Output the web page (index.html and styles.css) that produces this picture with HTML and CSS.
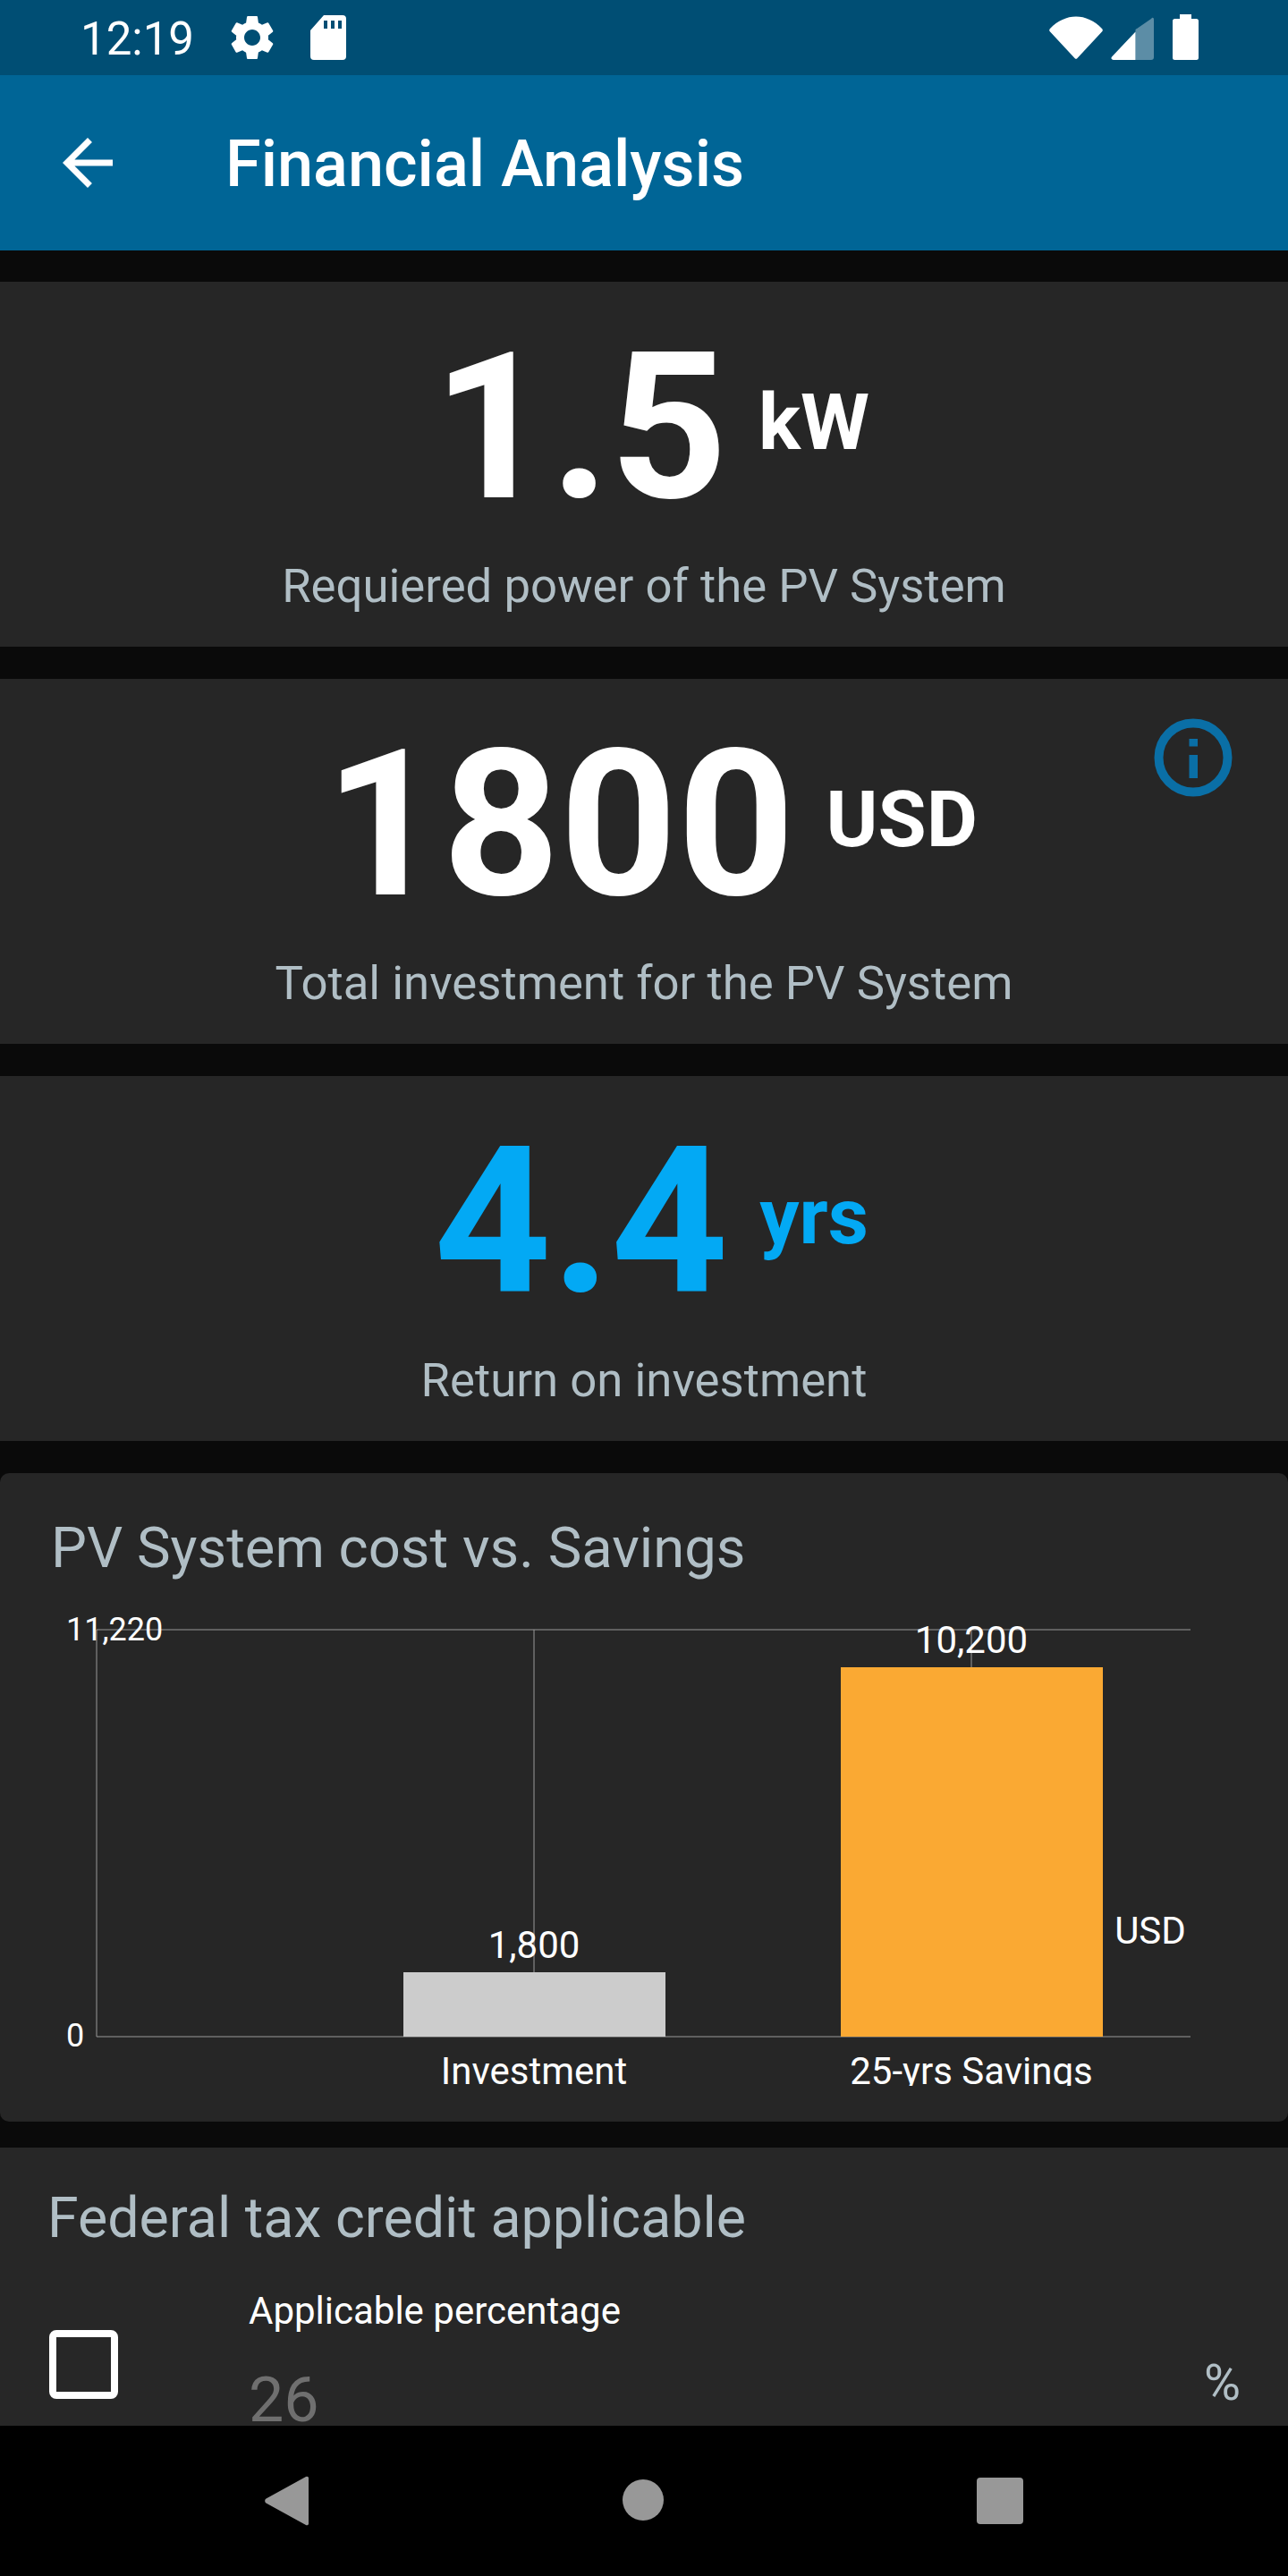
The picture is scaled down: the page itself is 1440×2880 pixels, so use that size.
FILE: index.html
```html
<!DOCTYPE html>
<html lang="en">
<head>
<meta charset="utf-8">
<title>Financial Analysis</title>
<link rel="stylesheet" href="styles.css">
</head>
<body>
<div class="screen">
  <header class="status">
    <span class="clock">12:19</span>
    <svg class="ic-gear" viewBox="0 0 24 24"><path d="M19.14 12.94c.04-.3.06-.61.06-.94 0-.32-.02-.64-.07-.94l2.03-1.58c.18-.14.23-.41.12-.61l-1.92-3.32c-.12-.22-.37-.29-.59-.22l-2.39.96c-.5-.38-1.03-.7-1.62-.94l-.36-2.54c-.04-.24-.24-.41-.48-.41h-3.84c-.24 0-.43.17-.47.41l-.36 2.54c-.59.24-1.13.57-1.62.94l-2.39-.96c-.22-.08-.47 0-.59.22L2.74 8.87c-.12.21-.08.47.12.61l2.03 1.58c-.05.3-.09.63-.09.94s.02.64.07.94l-2.03 1.58c-.18.14-.23.41-.12.61l1.92 3.32c.12.22.37.29.59.22l2.39-.96c.5.38 1.03.7 1.62.94l.36 2.54c.05.24.24.41.48.41h3.84c.24 0 .44-.17.47-.41l.36-2.54c.59-.24 1.13-.56 1.62-.94l2.39.96c.22.08.47 0 .59-.22l1.92-3.32c.12-.22.07-.47-.12-.61l-2.01-1.58zM12 15.6c-1.98 0-3.6-1.62-3.6-3.6s1.62-3.6 3.6-3.6 3.6 1.62 3.6 3.6-1.62 3.6-3.6 3.6z"/></svg>
    <svg class="ic-sd" viewBox="0 0 40 50"><path fill-rule="evenodd" d="M15 0H36a4 4 0 0 1 4 4V46a4 4 0 0 1-4 4H4a4 4 0 0 1-4-4V17zM15 6V15H19V6zM23 6V15H27V6zM31 6V15H35V6z"/></svg>
    <span class="status-space"></span>
    <svg class="ic-wifi" viewBox="0 0 60 50"><path d="M1 15C18-3 42-3 59 15a2.5 2.5 0 0 1 .4 3L31.500 48a2 2 0 0 1-3 0L.6 18a2.500 2.500 0 0 1 .4-3z"/></svg>
    <svg class="ic-signal" viewBox="0 0 48 48">
      <path class="dim" d="M27.500 14V48H45a3 3 0 0 0 3-3V3c0-2.500-1.500-3-3-1z"/>
      <path d="M27.500 16.500V48H3c-2.500 0-3.500-2-1.500-4z"/>
    </svg>
    <svg class="ic-battery" viewBox="0 0 29 51"><path d="M8 0H21V5H26.500A2.500 2.500 0 0 1 29 7.500V48.500A2.500 2.500 0 0 1 26.500 51H2.500A2.500 2.500 0 0 1 0 48.500V7.500A2.500 2.500 0 0 1 2.500 5H8z"/></svg>
  </header>

  <div class="toolbar">
    <svg class="ic-back" viewBox="0 0 24 24"><path d="M20 11H7.830l5.590-5.590L12 4l-8 8 8 8 1.410-1.410L7.830 13H20v-2z"/></svg>
    <h1 class="title">Financial Analysis</h1>
  </div>

  <main class="content">
    <section class="stat">
      <div class="stat-row"><span class="stat-num">1.5</span><span class="stat-unit">kW</span></div>
      <p class="stat-label">Requiered power of the PV System</p>
    </section>

    <section class="stat">
      <svg class="ic-info" viewBox="0 0 88 88">
        <circle cx="44" cy="44" r="38.500" />
        <rect x="39.500" y="23" width="9.500" height="8.500" />
        <rect x="39.500" y="41" width="9.500" height="26" />
      </svg>
      <div class="stat-row"><span class="stat-num">1800</span><span class="stat-unit stat-unit-usd">USD</span></div>
      <p class="stat-label">Total investment for the PV System</p>
    </section>

    <section class="stat stat-accent">
      <div class="stat-row"><span class="stat-num">4.4</span><span class="stat-unit">yrs</span></div>
      <p class="stat-label">Return on investment</p>
    </section>

    <section class="chart-card">
      <h2 class="card-title chart-title">PV System cost vs. Savings</h2>
      <svg class="chart" viewBox="0 1792 1440 540">
        <line class="grid" x1="108" y1="1822" x2="1331" y2="1822"/>
        <line class="grid" x1="108" y1="2277" x2="1331" y2="2277"/>
        <line class="grid" x1="108" y1="1822" x2="108" y2="2277"/>
        <line class="grid" x1="597" y1="1822" x2="597" y2="2277"/>
        <line class="grid" x1="1086" y1="1822" x2="1086" y2="2277"/>
        <rect class="bar-grey" x="451" y="2205" width="293" height="72"/>
        <rect class="bar-orange" x="940" y="1864" width="293" height="413"/>
        <text class="tick" x="74" y="1834">11,220</text>
        <text class="tick" x="74" y="2288">0</text>
        <text class="val" x="597" y="2189">1,800</text>
        <text class="val" x="1086" y="1848">10,200</text>
        <text class="val" x="1286" y="2173">USD</text>
        <text class="val" x="597" y="2330">Investment</text>
        <text class="val" x="1086" y="2330">25-yrs Savings</text>
      </svg>
    </section>

    <section class="tax-card">
      <h2 class="card-title tax-title">Federal tax credit applicable</h2>
      <div class="tax-row">
        <span class="checkbox"></span>
        <div class="field">
          <span class="field-label">Applicable percentage</span>
          <span class="field-value">26</span>
        </div>
        <span class="percent">%</span>
      </div>
    </section>
  </main>

  <nav class="navbar">
    <svg class="nav-back" viewBox="0 0 49 56"><path d="M46 1 1.500 25.500a3 3 0 0 0 0 5L46 55a2 2 0 0 0 3-2V3a2 2 0 0 0-3-2z"/></svg>
    <svg class="nav-home" viewBox="0 0 46 46"><circle cx="23" cy="23" r="23"/></svg>
    <svg class="nav-square" viewBox="0 0 52 52"><rect width="52" height="52" rx="4"/></svg>
  </nav>
</div>
</body>
</html>
```

FILE: styles.css
```css
* { box-sizing: border-box; }
html, body { margin: 0; padding: 0; background: #000; }
body { font-family: Roboto, "Liberation Sans", sans-serif; }
p, h1, h2 { margin: 0; font-weight: 400; }

.screen { width: 1440px; height: 2880px; display: flex; flex-direction: column; overflow: hidden; background: #0a0a0a; }

.status { height: 84px; flex: none; background: #004e74; display: flex; align-items: flex-start; padding-left: 90px; fill: #fff; color: #fff; }
.clock { font-size: 51px; line-height: 84px; width: 162px; flex: none; padding-top: 2px; }
.status svg { flex: none; display: block; }
.ic-gear { width: 60px; height: 60px; margin-top: 12px; }
.ic-sd { width: 40px; height: 50px; margin-top: 17px; margin-left: 35px; }
.status-space { flex: 1; }
.ic-wifi { width: 60px; height: 50px; margin-top: 17px; }
.ic-signal { width: 48px; height: 48px; margin-top: 19px; margin-left: 9px; }
.ic-signal .dim { opacity: .36; }
.ic-battery { width: 29px; height: 51px; margin-top: 16px; margin-left: 21px; margin-right: 100px; }

.toolbar { height: 196px; flex: none; background: #006596; display: flex; align-items: center; padding-left: 56px; color: #fff; fill: #fff; }
.ic-back { width: 84px; height: 84px; flex: none; }
.title { font-size: 72px; font-weight: 500; margin-left: 112px; line-height: 84px; padding-top: 4px; }

.content { flex: 1; min-height: 0; overflow: hidden; padding-top: 35px; display: flex; flex-direction: column; }

.stat { position: relative; height: 408px; flex: none; margin-bottom: 36px; background: #262626; display: flex; flex-direction: column; align-items: center; }
.stat-row { display: flex; align-items: flex-start; height: 280px; margin-top: 23px; padding-left: 16px; color: #fff; font-weight: 700; }
.stat-num { font-size: 229px; line-height: 280px; }
.stat-unit { font-size: 88px; line-height: 112px; margin-left: 35px; margin-top: 78px; }
.stat-label { font-size: 52.700px; line-height: 70px; color: #b0bec5; margin-top: 2px; }
.stat-accent .stat-row { color: #03a9f4; }

.ic-info { position: absolute; top: 44px; right: 62px; width: 88px; height: 88px; fill: #0a6fa6; }
.ic-info circle { fill: none; stroke: #0a6fa6; stroke-width: 10; }

.card-title { font-size: 63px; color: #b0bec5; line-height: 84px; }
.chart-card { height: 725px; flex: none; background: #262626; border-radius: 10px; margin-bottom: 29px; padding-top: 41px; }
.chart-title { margin-left: 57px; font-size: 63.300px; }
.chart { display: block; width: 1440px; height: 540px; margin-top: 20px; }
.grid { stroke: #999999; stroke-width: 1; }
.bar-grey { fill: #cccccc; }
.bar-orange { fill: #faa933; }
.chart text { fill: #fff; font-family: Roboto, sans-serif; }
.tick { font-size: 36px; }
.val { font-size: 42px; text-anchor: middle; }

.tax-card { flex: 1; background: #272727; min-height: 0; padding: 37px 0 0 53px; }
.tax-title { font-size: 62.700px; }
.tax-row { display: flex; align-items: flex-start; margin-top: 34px; position: relative; }
.checkbox { width: 77px; height: 77px; flex: none; margin-top: 49px; margin-left: 2px; border: 8px solid #fff; border-radius: 8px; }
.field { display: flex; flex-direction: column; margin-left: 146px; }
.field-label { font-size: 42px; line-height: 56px; color: #fff; }
.field-value { font-size: 70px; line-height: 84px; color: #6f6f6f; margin-top: 29px; }
.percent { margin-left: auto; margin-right: 53px; margin-top: 73px; font-size: 56px; line-height: 70px; color: #b0bec5; }

.navbar { height: 168px; flex: none; background: #000; display: block; position: relative; fill: #989898; }
.navbar svg { position: absolute; }
.nav-back { left: 296px; top: 56px; width: 49px; height: 56px; }
.nav-home { left: 696px; top: 60px; width: 46px; height: 46px; }
.nav-square { left: 1092px; top: 58px; width: 52px; height: 52px; }
```
